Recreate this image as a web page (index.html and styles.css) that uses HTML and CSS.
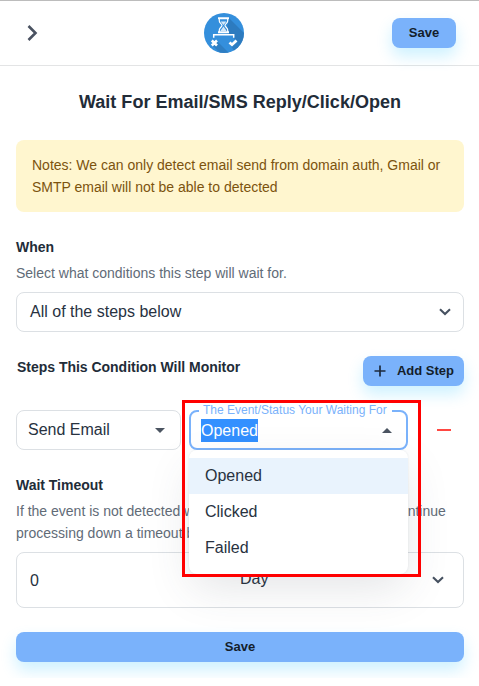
FILE: index.html
```html
<!DOCTYPE html>
<html lang="en">
<head>
<meta charset="utf-8">
<title>Wait For Email/SMS Reply/Click/Open</title>
<link rel="stylesheet" href="styles.css">
</head>
<body>
<div class="panel">
  <header class="topbar">
    <svg class="back" width="12" height="16" viewBox="0 0 12 16"><path d="M1.500 1 8.500 8 1.500 15" fill="none" stroke="#4a5261" stroke-width="2.600"/></svg>
    <svg class="logo" width="40" height="40" viewBox="0 0 40 40">
      <defs><clipPath id="disc"><circle cx="20" cy="20" r="20"/></clipPath></defs>
      <circle cx="20" cy="20" r="20" fill="#348fdc"/>
      <g clip-path="url(#disc)" fill="#2b74b5">
        <path d="M25 5 40 20V36L31 27 29 22 22 20Z" opacity=".75"/>
        <path d="M13 28 25 40H16L8 32ZM32 28 40 36 31 40 26 31Z" opacity=".65"/>
      </g>
      <g fill="none" stroke="#fff">
        <path d="M14 5.300H25M14 19.300H25" stroke-width="1.900"/>
        <path d="M15.300 6V8C15.300 10 18 11 18 12.400S15.300 15 15.300 17V19M23.700 6V8C23.700 10 21 11 21 12.400S23.700 15 23.700 17V19" stroke-width="1.200"/>
        <path d="M9.700 24.700V21.800H29.700V24.700" stroke-width="1.500"/>
        <path d="M7.800 27.500 13 32.500M13 27.500 7.800 32.500" stroke-width="2.600"/>
        <path d="M25.500 29.500 28 31.700 32.500 27.500" stroke-width="2.800"/>
      </g>
      <path d="M16.600 8.500H22.400L19.500 12ZM19.500 13.500 22.700 18H16.300Z" fill="#fff" opacity=".8"/>
    </svg>
    <button class="btn btn-top">Save</button>
  </header>
  <main class="content">
    <h1>Wait For Email/SMS Reply/Click/Open</h1>
    <div class="note">Notes: We can only detect email send from domain auth, Gmail or<br>SMTP email will not be able to detected</div>
    <section class="when">
      <h2>When</h2>
      <p>Select what conditions this step will wait for.</p>
      <div class="field select">
        <span>All of the steps below</span>
        <svg width="12" height="8" viewBox="0 0 12 8"><path d="M1 1.300 6 6 11 1.300" fill="none" stroke="#465160" stroke-width="2.100"/></svg>
      </div>
    </section>
    <div class="steps-head">
      <h2>Steps This Condition Will Monitor</h2>
      <button class="btn btn-add"><svg width="12" height="12" viewBox="0 0 12 12"><path d="M6 .5V11.500M.5 6H11.500" stroke="#1c2a3c" stroke-width="1.700"/></svg>Add Step</button>
    </div>
    <div class="step-row">
      <div class="field source"><span>Send Email</span><i class="caret down"></i></div>
      <div class="event">
        <div class="field focused"><span class="picked">Opened</span><i class="caret up"></i></div>
        <label>The Event/Status Your Waiting For</label>
        <ul class="menu">
          <li class="active">Opened</li>
          <li>Clicked</li>
          <li>Failed</li>
        </ul>
        <div class="highlight"></div>
      </div>
      <span class="remove"></span>
    </div>
    <section class="timeout">
      <h2>Wait Timeout</h2>
      <p>If the event is not detected <span class="limit">within the time set below, we will</span> continue<br>processing down a timeout branch.</p>
      <div class="field duration">
        <span class="amount">0</span>
        <span class="unit">Day</span>
        <svg width="12" height="8" viewBox="0 0 12 8"><path d="M1 1.300 6 6 11 1.300" fill="none" stroke="#465160" stroke-width="2.100"/></svg>
      </div>
    </section>
    <button class="btn btn-wide">Save</button>
  </main>
</div>
</body>
</html>
```
FILE: styles.css
```css
* { box-sizing: border-box; }
body { margin: 0; background: #fff; color: #28323f; font-family: "Liberation Sans", Arial, sans-serif; }
h1, h2, p, ul { margin: 0; padding: 0; }
.panel { height: 678px; overflow: hidden; border-top: 1px solid #bcbcbc; }
.topbar { height: 65px; border-bottom: 1px solid #e3e4e5; display: grid; grid-template-columns: 177px 40px 1fr; align-items: center; padding: 0 23px 0 27px; }
.btn { border: 0; border-radius: 8px; background: #7ab2fb; color: #141e2b; font: bold 13px/30px "Liberation Sans", Arial, sans-serif; letter-spacing: 0; height: 30px; padding: 0; box-shadow: 0 8px 16px rgba(0, 184, 255, .2); }
.btn-top { width: 64px; justify-self: end; }
.content { padding: 0 15px 0 16px; }
h1 { margin-top: 23px; color: #222c38; font-size: 18px; line-height: 26px; letter-spacing: .02px; text-align: center; }
.note { margin-top: 25px; height: 72px; padding: 14px 16px; border-radius: 8px; background: #fff6cf; color: #7c530e; font-size: 14px; line-height: 22px; white-space: nowrap; }
h2 { color: #222c38; font-size: 14px; line-height: 22px; letter-spacing: -.02px; }
p { color: #616b77; font-size: 14px; line-height: 22px; white-space: nowrap; }
.when { margin-top: 24px; }
.when p { margin-top: 4px; }
.field { height: 40px; border: 1px solid #dce0e4; border-radius: 8px; display: flex; align-items: center; justify-content: space-between; font-size: 16px; }
.select { margin-top: 8px; padding: 0 12px 0 13px; }
.steps-head { margin-top: 24px; display: flex; justify-content: space-between; }
.steps-head h2 { padding-left: 1px; }
.btn-add { width: 101px; display: flex; align-items: center; justify-content: flex-end; gap: 11px; padding-right: 10px; }
.step-row { margin-top: 24px; display: grid; grid-template-columns: 165px 219px 14px; column-gap: 8px; align-items: center; }
.source { padding: 0 15px 0 11px; }
.event { position: relative; }
.focused { border: 2px solid #7ab2fb; padding: 0 14px 0 10px; }
.event label { position: absolute; left: 10px; top: -7px; padding: 0 5px 0 4px; background: #fff; color: #7ab2fb; font-size: 12px; line-height: 14px; white-space: nowrap; }
.picked { background: #3390ff; color: #fff; line-height: 23px; height: 23px; }
.caret { width: 0; border: 5px solid transparent; }
.down { border-top-color: #4b5461; border-bottom: 0; }
.up { border-bottom-color: #4b5461; border-top: 0; }
.menu { position: absolute; z-index: 2; left: 0; top: 40px; width: 219px; height: 124px; padding: 8px 0; list-style: none; background: #fff; border-radius: 8px; box-shadow: 0 0 2px rgba(145, 158, 171, .24), 0 16px 46px -4px rgba(60, 70, 80, .15); }
.menu li { height: 36px; padding-left: 16px; font-size: 16px; line-height: 35px; }
.menu .active { background: #e9f3fd; }
.highlight { position: absolute; z-index: 3; left: -7px; top: -10px; width: 239px; height: 177px; border: 3px solid #f00; }
.remove { margin-left: 21px; width: 14px; height: 2px; background: #ff4842; }
.timeout { margin-top: 24px; }
.timeout p { margin-top: 4px; }
.limit { letter-spacing: .12px; }
.duration { margin-top: 8px; height: 56px; padding: 0 19px 0 13px; display: grid; grid-template-columns: 210px 1fr 12px; }
.amount { padding-top: 1px; }
.unit { padding-bottom: 2px; }
.btn-wide { display: block; width: 100%; margin-top: 24px; }
```
